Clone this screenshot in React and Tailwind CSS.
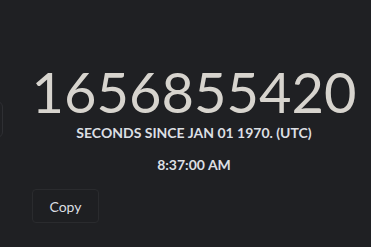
import React from 'react';

function App() {
  return (
    <div className="w-[371px] h-[247px] overflow-hidden bg-[#1f2023] relative font-['Lato',sans-serif]">
      {/* Left: partially visible panel */}
      <div className="absolute left-[-60px] top-[101px] w-[63px] h-[37px] rounded-md border border-[#2e2f33]" />

      <div className="flex flex-col pl-[17px] pt-[62px]">
        <div className="flex flex-col items-center w-[354px]">
          <h1 className="text-[56px] leading-[60px] font-normal text-[#d7d4ce]">
            1656855420
          </h1>
          <p className="mt-[2px] text-[14px] leading-[17px] font-bold text-[#dcdfe3]">
            SECONDS SINCE JAN 01 1970. (UTC)
          </p>
          <p className="mt-[15px] text-[14px] leading-[17px] font-bold text-[#dcdfe3]">
            8:37:00 AM
          </p>
        </div>
        <div className="mt-[16px] ml-[15px]">
          <button className="w-[67px] h-[34px] rounded-[4px] border border-[#2a2b2e] bg-[#1e1f22] text-[14px] text-[#dcdfe3]">
            Copy
          </button>
        </div>
      </div>
    </div>
  );
}

export default App;
